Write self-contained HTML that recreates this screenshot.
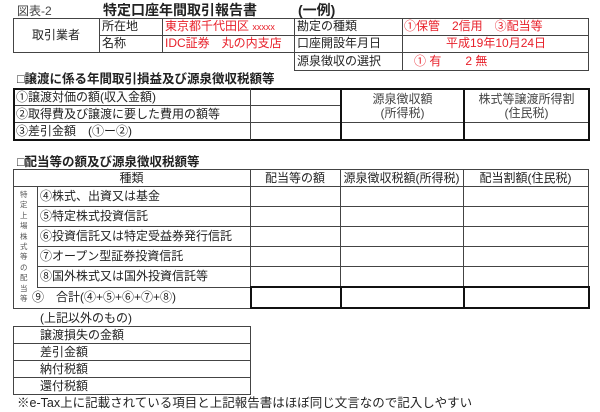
<!DOCTYPE html>
<html><head><meta charset="utf-8"><style>
*{margin:0;padding:0;box-sizing:border-box}
body{width:600px;height:412px;background:#fff;position:relative;overflow:hidden;font-family:"Liberation Sans","Noto Sans CJK JP",sans-serif;font-size:12px;color:#222}
.t{position:absolute;white-space:nowrap;line-height:1}
.r{color:#e8202a}
.h{position:absolute;height:1px;background:#444}
.v{position:absolute;width:1px;background:#444}
.H{position:absolute;height:2px;background:#111}
.V{position:absolute;width:2px;background:#111}
.c{text-align:center}
</style></head><body>
<div class="t" style="left:17px;top:5px;font-size:12px;color:#444">図表-2</div>
<div class="t" style="left:103px;top:3px;font-size:14px;font-weight:bold">特定口座年間取引報告書</div>
<div class="t" style="left:298px;top:3px;font-size:14px;font-weight:bold">(一例)</div>

<div class="h" style="left:13px;top:18px;width:576px"></div>
<div class="h" style="left:99px;top:35px;width:490px"></div>
<div class="h" style="left:13px;top:52px;width:576px"></div>
<div class="h" style="left:294px;top:70px;width:295px"></div>
<div class="v" style="left:13px;top:18px;height:35px"></div>
<div class="v" style="left:99px;top:18px;height:35px"></div>
<div class="v" style="left:162px;top:18px;height:35px"></div>
<div class="v" style="left:294px;top:18px;height:53px"></div>
<div class="v" style="left:402px;top:18px;height:53px"></div>
<div class="v" style="left:588px;top:18px;height:53px"></div>
<div class="t" style="left:32px;top:29px">取引業者</div>
<div class="t" style="left:102px;top:20px">所在地</div>
<div class="t" style="left:102px;top:37px">名称</div>
<div class="t r" style="left:165px;top:20px">東京都千代田区 <span style="font-size:9px">xxxxx</span></div>
<div class="t r" style="left:165px;top:37px">IDC証券　丸の内支店</div>
<div class="t" style="left:297px;top:20px">勘定の種類</div>
<div class="t" style="left:297px;top:37px">口座開設年月日</div>
<div class="t" style="left:297px;top:55px">源泉徴収の選択</div>
<div class="t r" style="left:404px;top:20px">①保管　2信用　③配当等</div>
<div class="t r" style="left:446px;top:37px">平成19年10月24日</div>
<div class="t r" style="left:414px;top:55px">①  有　　2  無</div>

<div class="t" style="left:17px;top:73px;font-weight:bold;font-size:12.5px">□譲渡に係る年間取引損益及び源泉徴収税額等</div>
<div class="H" style="left:13px;top:88px;width:577px"></div>
<div class="H" style="left:13px;top:139px;width:577px"></div>
<div class="h" style="left:13px;top:105px;width:328px"></div>
<div class="h" style="left:13px;top:122px;width:577px"></div>
<div class="V" style="left:13px;top:88px;height:53px"></div>
<div class="v" style="left:250px;top:88px;height:52px"></div>
<div class="V" style="left:340px;top:88px;height:52px"></div>
<div class="V" style="left:463px;top:88px;height:52px"></div>
<div class="V" style="left:588px;top:88px;height:53px"></div>
<div class="t" style="left:16px;top:91px">①譲渡対価の額(収入金額)</div>
<div class="t" style="left:16px;top:108px">②取得費及び譲渡に要した費用の額等</div>
<div class="t" style="left:16px;top:125px">③差引金額　(①ー②)</div>
<div class="t c" style="left:342px;width:121px;top:93px;color:#444">源泉徴収額</div>
<div class="t c" style="left:342px;width:121px;top:107px;color:#444">(所得税)</div>
<div class="t c" style="left:465px;width:123px;top:93px;color:#444">株式等譲渡所得割</div>
<div class="t c" style="left:465px;width:123px;top:107px;color:#444">(住民税)</div>

<div class="t" style="left:17px;top:156px;font-weight:bold;font-size:12.5px">□配当等の額及び源泉徴収税額等</div>
<div class="h" style="left:13px;top:169px;width:576px"></div>
<div class="h" style="left:13px;top:186px;width:576px"></div>
<div class="h" style="left:37px;top:206px;width:552px"></div>
<div class="h" style="left:37px;top:226px;width:552px"></div>
<div class="h" style="left:37px;top:246px;width:552px"></div>
<div class="h" style="left:37px;top:266px;width:552px"></div>
<div class="h" style="left:37px;top:287px;width:213px"></div>
<div class="H" style="left:250px;top:286px;width:340px"></div>
<div class="h" style="left:13px;top:308px;width:237px"></div>
<div class="H" style="left:250px;top:307px;width:340px"></div>
<div class="v" style="left:13px;top:169px;height:140px"></div>
<div class="v" style="left:37px;top:186px;height:101px"></div>
<div class="v" style="left:250px;top:169px;height:140px"></div>
<div class="v" style="left:340px;top:169px;height:118px"></div>
<div class="v" style="left:463px;top:169px;height:118px"></div>
<div class="v" style="left:588px;top:169px;height:118px"></div>
<div class="V" style="left:250px;top:286px;height:23px"></div>
<div class="V" style="left:340px;top:286px;height:23px"></div>
<div class="V" style="left:463px;top:286px;height:23px"></div>
<div class="V" style="left:588px;top:286px;height:23px"></div>
<div class="t c" style="left:13px;width:237px;top:172px">種類</div>
<div class="t c" style="left:250px;width:90px;top:172px">配当等の額</div>
<div class="t c" style="left:340px;width:123px;top:172px">源泉徴収税額(所得税)</div>
<div class="t c" style="left:463px;width:125px;top:172px">配当割額(住民税)</div>
<div class="t" style="left:20px;top:190px;font-size:7.5px;line-height:10.4px;white-space:normal;width:8px;color:#555">特定上場株式等の配当等</div>
<div class="t" style="left:40px;top:190px">④株式、出資又は基金</div>
<div class="t" style="left:40px;top:210px">⑤特定株式投資信託</div>
<div class="t" style="left:40px;top:230px">⑥投資信託又は特定受益券発行信託</div>
<div class="t" style="left:40px;top:250px">⑦オープン型証券投資信託</div>
<div class="t" style="left:40px;top:270px">⑧国外株式又は国外投資信託等</div>
<div class="t" style="left:32px;top:291px">⑨　合計(④+⑤+⑥+⑦+⑧)</div>

<div class="t" style="left:40px;top:312px">(上記以外のもの)</div>
<div class="h" style="left:13px;top:326px;width:238px"></div>
<div class="h" style="left:13px;top:343px;width:238px"></div>
<div class="h" style="left:13px;top:360px;width:238px"></div>
<div class="h" style="left:13px;top:377px;width:238px"></div>
<div class="h" style="left:13px;top:394px;width:238px"></div>
<div class="v" style="left:13px;top:326px;height:69px"></div>
<div class="v" style="left:250px;top:326px;height:69px"></div>
<div class="t" style="left:40px;top:329px">譲渡損失の金額</div>
<div class="t" style="left:40px;top:346px">差引金額</div>
<div class="t" style="left:40px;top:363px">納付税額</div>
<div class="t" style="left:40px;top:380px">還付税額</div>
<div class="t" style="left:17px;top:397px;font-size:12.5px">※e-Tax上に記載されている項目と上記報告書はほぼ同じ文言なので記入しやすい</div>
</body></html>
